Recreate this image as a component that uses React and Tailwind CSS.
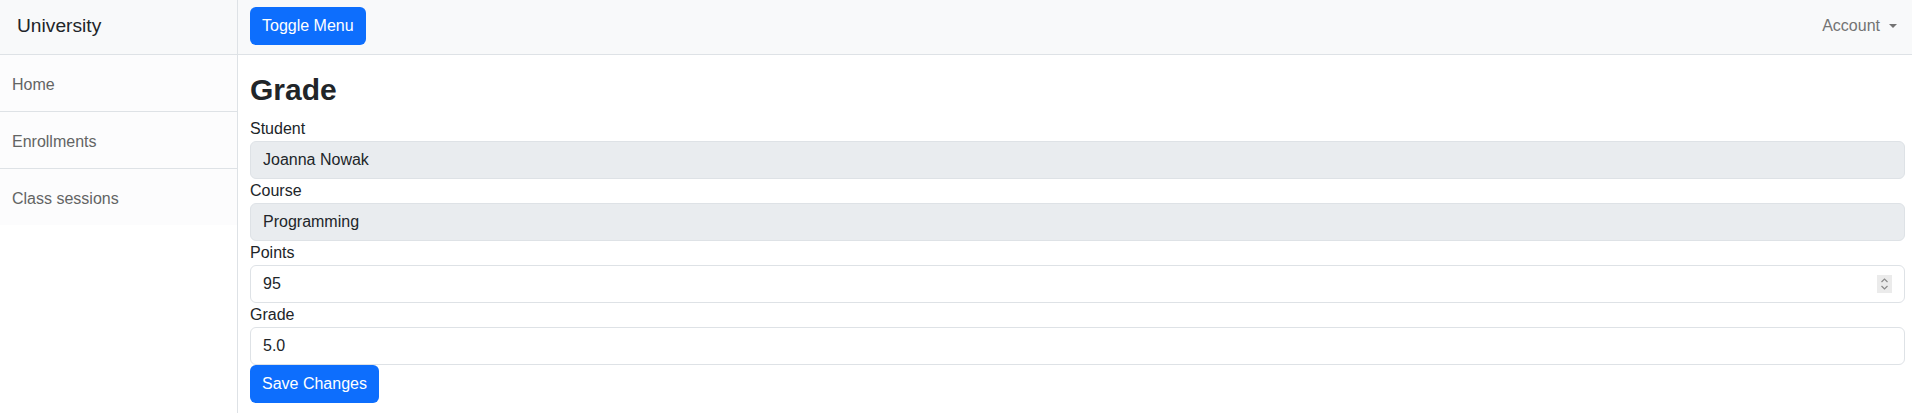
import { useState } from 'react';

const font = { fontFamily: '"Liberation Sans", Arial, sans-serif' };

const menu = ['Home', 'Enrollments', 'Class sessions'];

function Field({ label, value, disabled, number }) {
  return (
    <div>
      <label className="block text-[16px] leading-6 text-[#212529]">{label}</label>
      <div className="relative">
        <input
          type="text"
          readOnly
          value={value}
          disabled={disabled}
          className={
            'block w-full h-[38px] px-3 text-[16px] text-[#212529] border border-[#dee2e6] rounded-[6px] outline-none ' +
            (disabled ? 'bg-[#e9ecef]' : 'bg-white')
          }
        />
        {number && (
          // spin box of a number input
          <div className="absolute right-[13px] top-[10px] w-[15px] h-[18px] bg-[#ebebeb] flex items-center justify-center">
            <svg width="9" height="14" viewBox="0 0 9 14" fill="none" stroke="#8a8a8a" strokeWidth="1.2">
              <path d="M1.5 5 L4.5 2 L7.5 5" />
              <path d="M1.5 9 L4.5 12 L7.5 9" />
            </svg>
          </div>
        )}
      </div>
    </div>
  );
}

export default function App() {
  const [open, setOpen] = useState(true);

  return (
    <div className="flex min-h-[413px] bg-white" style={font}>
      {/* Sidebar */}
      {open && (
        <aside className="w-[238px] shrink-0 border-r border-[#dee2e6] bg-white">
          <div className="h-[55px] flex items-center pl-[17px] pb-[2px] bg-[#f8f9fa] border-b border-[#dee2e6] text-[19.2px] text-[#212529]">
            University
          </div>
          <ul>
            {menu.map((item, i) => (
              <li
                key={item}
                className={
                  'px-3 pt-[18px] pb-[14px] text-[16px] leading-6 text-[#636464] bg-[#fcfcfd] ' +
                  (i < menu.length - 1 ? 'border-b border-[#dee2e6]' : '')
                }
              >
                {item}
              </li>
            ))}
          </ul>
        </aside>
      )}

      {/* Page content */}
      <div className="flex-1 min-w-0">
        <nav className="h-[55px] flex items-center justify-between pl-3 pr-[15px] pb-[2px] bg-[#f8f9fa] border-b border-[#dee2e6]">
          <button
            onClick={() => setOpen(!open)}
            className="h-[38px] px-3 rounded-[6px] bg-[#0d6efd] text-white text-[16px]"
          >
            Toggle Menu
          </button>
          <div className="flex items-center text-[16px] text-[#737373]">
            Account
            <span className="ml-[9px] w-0 h-0 border-l-[4px] border-r-[4px] border-t-[4.5px] border-l-transparent border-r-transparent border-t-[#737373]" />
          </div>
        </nav>

        <div className="pl-3 pr-[7px]">
          <h2 className="mt-4 mb-2 text-[30px] leading-[38.4px] font-bold text-[#212529]">Grade</h2>
          <Field label="Student" value="Joanna Nowak" disabled />
          <Field label="Course" value="Programming" disabled />
          <Field label="Points" value="95" number />
          <Field label="Grade" value="5.0" />
          <button className="h-[38px] px-3 rounded-[6px] bg-[#0d6efd] text-white text-[16px]">
            Save Changes
          </button>
        </div>
      </div>
    </div>
  );
}
